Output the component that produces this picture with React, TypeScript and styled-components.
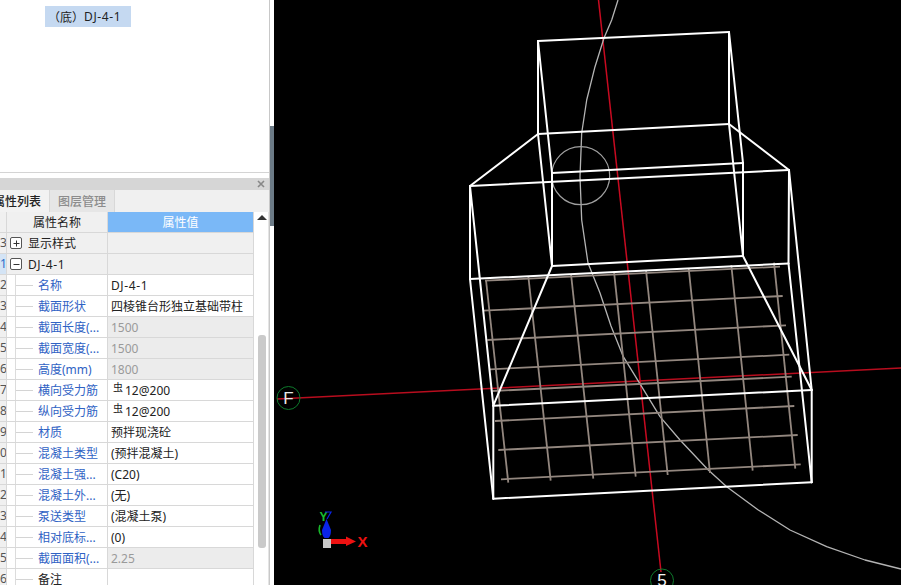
import styled, { createGlobalStyle } from "styled-components";

const GlobalStyle = createGlobalStyle`
  html, body {
    margin: 0;
    height: 100%;
    overflow: hidden;
    background: #000;
  }
  body {
    font-family: "Noto Sans", "Noto Sans CJK SC", sans-serif;
    font-size: 12px;
    color: #222;
  }
`;

const Page = styled.div`
  display: flex;
  width: 901px;
  height: 585px;
  overflow: hidden;
`;

const SidePanel = styled.div`
  display: flex;
  flex-direction: column;
  width: 269px;
  height: 585px;
  background: #fff;
  flex: none;
`;

const TreeArea = styled.div`
  height: 173px;
  padding: 6px 0 0 45px;
  box-sizing: border-box;
  border-bottom: 1px solid #d4d4d4;
  flex: none;
`;

const TreeChip = styled.div`
  display: inline-flex;
  align-items: center;
  height: 21px;
  width: 86px;
  box-sizing: border-box;
  background: #c5d9f1;
  padding-left: 3px;
  white-space: nowrap;
`;

const Latin = styled.span`
  letter-spacing: 0.6px;
`;

const PanelGap = styled.div`
  height: 5px;
  flex: none;
`;

const TitleBar = styled.div`
  display: flex;
  justify-content: flex-end;
  align-items: center;
  height: 12px;
  padding-right: 4px;
  background: #d6d6d6;
  flex: none;
`;

const CloseIcon = styled.svg`
  width: 8px;
  height: 8px;
`;

const TabStrip = styled.div`
  display: flex;
  height: 22px;
  background: #f0f0f0;
  flex: none;
  overflow: hidden;
`;

const Tab = styled.div<{ $active?: boolean }>`
  display: flex;
  align-items: center;
  justify-content: flex-end;
  width: ${(p) => (p.$active ? "50px" : "65px")};
  padding-right: 8px;
  box-sizing: border-box;
  font-weight: 500;
  white-space: nowrap;
  flex: none;
  color: ${(p) => (p.$active ? "#222" : "#8c8c8c")};
  background: ${(p) => (p.$active ? "#f2f2f2" : "#e6e6e6")};
  border-right: 1px solid #d8d8d8;
`;

const TableWrap = styled.div`
  display: flex;
  flex: 1;
  min-height: 0;
  background: #fff;
`;

const Table = styled.div`
  width: 254px;
  flex: none;
  overflow: hidden;
  border-right: 1px solid #d8d8d8;
  box-sizing: border-box;
`;

const Row = styled.div`
  display: flex;
  height: 21px;
  box-sizing: border-box;
  border-bottom: 1px solid #d8d8d8;
`;

const NumCell = styled.div<{ $selected?: boolean }>`
  position: relative;
  width: 7px;
  flex: none;
  overflow: hidden;
  box-sizing: border-box;
  text-align: right;
  line-height: 20px;
  padding-right: 1px;
  color: ${(p) => (p.$selected ? "#2a6fc9" : "#555")};
  background: ${(p) => (p.$selected ? "#d4e4f5" : "#f0f0f0")};
  border-right: 1px solid #d8d8d8;
`;

const NameCell = styled.div<{ $group?: boolean; $header?: boolean }>`
  position: relative;
  display: flex;
  align-items: center;
  width: 101px;
  flex: none;
  box-sizing: border-box;
  white-space: nowrap;
  overflow: hidden;
  border-right: 1px solid #d8d8d8;
  justify-content: ${(p) => (p.$header ? "center" : "flex-start")};
  padding-left: ${(p) => (p.$header ? "0" : p.$group ? "21px" : "31px")};
  background: ${(p) => (p.$group || p.$header ? "#f0f0f0" : "#fff")};
`;

const NameLabel = styled.span<{ $plain?: boolean }>`
  color: ${(p) => (p.$plain ? "#222" : "#2f62c4")};
`;

const TreeStem = styled.span`
  position: absolute;
  left: 8px;
  top: 0;
  bottom: 0;
  width: 17px;
  border-left: 1px solid #dcdcdc;

  &::after {
    content: "";
    position: absolute;
    left: 0;
    right: 0;
    top: 10px;
    border-top: 1px solid #d4d4d4;
  }
`;

const ToggleBox = styled.span`
  position: absolute;
  left: 3px;
  top: 4px;
  width: 12px;
  height: 12px;
  box-sizing: border-box;
  border: 1px solid #555;
  border-radius: 2px;
  background: #fff;
  display: flex;
  align-items: center;
  justify-content: center;
`;

const ToggleMark = styled.svg`
  width: 7px;
  height: 7px;
`;

const ValueCell = styled.div<{ $tone?: "group" | "readonly" | "header" }>`
  display: flex;
  align-items: center;
  flex: 1;
  min-width: 0;
  padding-left: ${(p) => (p.$tone === "header" ? "0" : "3px")};
  white-space: nowrap;
  overflow: hidden;
  color: ${(p) => (p.$tone === "readonly" ? "#9a9a9a" : p.$tone === "header" ? "#fff" : "#222")};
  justify-content: ${(p) => (p.$tone === "header" ? "center" : "flex-start")};
  background: ${(p) =>
    p.$tone === "header"
      ? "#7ab8f7"
      : p.$tone === "group"
        ? "#f0f0f0"
        : p.$tone === "readonly"
          ? "#ececec"
          : "#fff"};
`;

const RebarMark = styled.span`
  font-size: 10px;
  line-height: 1;
  position: relative;
  top: -3px;
  margin: 0 2px 0 2px;
`;

const ScrollTrack = styled.div`
  position: relative;
  flex: 1;
  background: #fff;
  border-right: 1px solid #e4e4e4;
`;

const ScrollArrow = styled.span`
  position: absolute;
  left: 3px;
  top: 3px;
  width: 0;
  height: 0;
  border-left: 5px solid transparent;
  border-right: 5px solid transparent;
  border-bottom: 5px solid #333;
`;

const ScrollThumb = styled.span`
  position: absolute;
  left: 4px;
  top: 123px;
  width: 8px;
  height: 213px;
  border-radius: 3px;
  background: #cacaca;
`;

const Splitter = styled.div`
  width: 5px;
  flex: none;
  height: 585px;
  padding-top: 126px;
  box-sizing: border-box;
  background: #fff;
  border-left: 1px solid #c8c8c8;
`;

const SplitterHandle = styled.div`
  height: 100px;
  background: #6b7a86;
`;

const Viewport = styled.div`
  flex: 1;
  background: #000;
  overflow: hidden;
`;

const Scene = styled.svg`
  display: block;
  width: 100%;
  height: 100%;
`;

type Prop = {
  num: string;
  name: string;
  value?: string;
  tone?: "readonly";
  rebar?: boolean;
  plain?: boolean;
  latin?: boolean;
};

const PROPS: Prop[] = [
  { num: "2", name: "名称", value: "DJ-4-1", latin: true },
  { num: "3", name: "截面形状", value: "四棱锥台形独立基础带柱" },
  { num: "4", name: "截面长度(...", value: "1500", tone: "readonly" },
  { num: "5", name: "截面宽度(...", value: "1500", tone: "readonly" },
  { num: "6", name: "高度(mm)", value: "1800", tone: "readonly" },
  { num: "7", name: "横向受力筋", value: "12@200", rebar: true },
  { num: "8", name: "纵向受力筋", value: "12@200", rebar: true },
  { num: "9", name: "材质", value: "预拌现浇砼" },
  { num: "0", name: "混凝土类型", value: "(预拌混凝土)" },
  { num: "1", name: "混凝土强...", value: "(C20)" },
  { num: "2", name: "混凝土外...", value: "(无)" },
  { num: "3", name: "泵送类型", value: "(混凝土泵)" },
  { num: "4", name: "相对底标...", value: "(0)" },
  { num: "5", name: "截面面积(...", value: "2.25", tone: "readonly" },
  { num: "6", name: "备注", plain: true },
];

// page coordinates, the svg viewBox starts at the left edge of the viewport
const WHITE_LINES = [
  [538, 41, 729, 32],
  [538, 134, 729, 124],
  [538, 41, 538, 134],
  [729, 32, 729, 124],
  [552, 173, 743, 163],
  [470, 186, 789, 170],
  [538, 134, 470, 186],
  [729, 124, 789, 170],
  [552, 266, 743, 256],
  [538, 134, 552, 266],
  [729, 124, 743, 256],
  [470, 279, 788.5, 263.5],
  [470, 186, 470, 279],
  [789, 170, 788.5, 263.5],
  [493.3, 405.7, 811.7, 390],
  [493.3, 498.7, 811.7, 482.3],
  [493.3, 405.7, 493.3, 498.7],
  [811.7, 390, 811.7, 482.3],
  [470, 186, 493.3, 405.7],
  [470, 279, 493.3, 498.7],
  [789, 170, 811.7, 390],
  [788.5, 263.5, 811.7, 482.3],
  [552, 266, 493.3, 405.7],
  [743, 256, 811.7, 390],
];

const COLUMN_EDGES = ["M538 41L552 173L552 266", "M729 32L743 163L743 256"];

const REBAR_LINES = [
  [485, 280.7, 780, 266.7],
  [483.3, 310.7, 782.7, 296],
  [487.3, 340, 786, 325.3],
  [490, 369.3, 789.3, 354.7],
  [492.3, 391, 791.7, 376.7],
  [495, 421, 794.3, 406],
  [498.3, 450, 797.7, 435],
  [501, 479.3, 800.7, 464.3],
  [486, 280, 508.3, 482.7],
  [528.3, 276, 550.7, 480.7],
  [571, 274, 593.3, 478.7],
  [614, 271.7, 635.7, 476.7],
  [646, 270, 667.7, 475],
  [688.7, 268.3, 710, 473],
  [731.3, 265, 752.7, 470.7],
  [774, 262.7, 795.3, 468.7],
];

const ARC_POINTS =
  "618,0 611.7,20 604,38 595,66.7 586.7,100 581.7,133 580,176.7 581.7,220 588,263 600,293 611,326 623.3,356.7 641.7,386.7 660,416.7 680,440 708.3,470 726.7,486.7 758.3,510 790,530 826.7,546.7 865,560 901,569";

function ModelScene() {
  return (
    <Scene viewBox="274 0 627 585" preserveAspectRatio="xMinYMin slice">
      <line x1="598.5" y1="0" x2="661" y2="572" stroke="#c80a20" strokeWidth="1.5" />
      <line x1="277" y1="399" x2="901" y2="368" stroke="#b80d1e" strokeWidth="1.5" />

      <polyline
        points={ARC_POINTS}
        fill="none"
        stroke="#b4b4b4"
        strokeWidth="1.3"
        strokeLinejoin="round"
      />
      <circle cx="580.7" cy="175.7" r="29" fill="none" stroke="#a0a0a0" strokeWidth="1.2" />

      {REBAR_LINES.map(([x1, y1, x2, y2], i) => (
        <line key={i} x1={x1} y1={y1} x2={x2} y2={y2} stroke="#93877f" strokeWidth="1.8" />
      ))}

      <g stroke="#fff" strokeWidth="2" fill="none" strokeLinecap="round">
        {WHITE_LINES.map(([x1, y1, x2, y2], i) => (
          <line key={i} x1={x1} y1={y1} x2={x2} y2={y2} />
        ))}
        {COLUMN_EDGES.map((d) => (
          <path key={d} d={d} />
        ))}
      </g>

      <circle cx="288.5" cy="398" r="11.5" fill="none" stroke="#0e7a2c" strokeWidth="1" />
      <text x="288.5" y="404" fill="#e8e8e8" fontSize="17" textAnchor="middle" fontFamily="Liberation Sans, sans-serif">
        F
      </text>
      <circle cx="662" cy="580.5" r="11.5" fill="none" stroke="#0e7a2c" strokeWidth="1" />
      <text x="662" y="586" fill="#f4f4f4" fontSize="17" textAnchor="middle" fontFamily="Liberation Sans, sans-serif">
        5
      </text>

      {/* axis triad */}
      <path d="M320 525Q318 531 321 535" fill="none" stroke="#18b52a" strokeWidth="1.6" />
      <path d="M326.5 519L331 530Q331 536 328.5 538L324.5 538Q322 536 322 530Z" fill="#0a24e8" />
      <rect x="323" y="539" width="8" height="9" fill="#c8c8c8" />
      <path d="M331 539H346V536.5L356 541.5L346 546V544H331Z" fill="#ee1111" />
      <text x="357.5" y="547" fill="#ee1111" fontSize="15" fontWeight="700" fontFamily="Liberation Sans, sans-serif">
        X
      </text>
      <text x="319.5" y="520.5" fill="#18c030" fontSize="12" fontWeight="700" fontFamily="Liberation Sans, sans-serif">
        Y
      </text>
      <path d="M325 512H331L327 519" fill="none" stroke="#0a24e8" strokeWidth="1.2" />
    </Scene>
  );
}

export default function App() {
  return (
    <Page>
      <GlobalStyle />
      <SidePanel>
        <TreeArea>
          <TreeChip>
            （底）<Latin>DJ-4-1</Latin>
          </TreeChip>
        </TreeArea>
        <PanelGap />
        <TitleBar>
          <CloseIcon viewBox="0 0 8 8">
            <path d="M1 1L7 7M7 1L1 7" stroke="#888" strokeWidth="1.6" />
          </CloseIcon>
        </TitleBar>
        <TabStrip>
          <Tab $active>属性列表</Tab>
          <Tab>图层管理</Tab>
        </TabStrip>
        <TableWrap>
          <Table>
            <Row>
              <NumCell />
              <NameCell $header>属性名称</NameCell>
              <ValueCell $tone="header">属性值</ValueCell>
            </Row>
            <Row>
              <NumCell>3</NumCell>
              <NameCell $group>
                <ToggleBox>
                  <ToggleMark viewBox="0 0 7 7">
                    <path d="M0.5 3.5H6.5M3.5 0.5V6.5" stroke="#333" strokeWidth="1" />
                  </ToggleMark>
                </ToggleBox>
                <NameLabel $plain>显示样式</NameLabel>
              </NameCell>
              <ValueCell $tone="group" />
            </Row>
            <Row>
              <NumCell $selected>1</NumCell>
              <NameCell $group>
                <ToggleBox>
                  <ToggleMark viewBox="0 0 7 7">
                    <path d="M0.5 3.5H6.5" stroke="#333" strokeWidth="1" />
                  </ToggleMark>
                </ToggleBox>
                <NameLabel $plain>
                  <Latin>DJ-4-1</Latin>
                </NameLabel>
              </NameCell>
              <ValueCell $tone="group" />
            </Row>
            {PROPS.map((p, i) => (
              <Row key={i}>
                <NumCell>{p.num}</NumCell>
                <NameCell>
                  <TreeStem />
                  <NameLabel $plain={p.plain}>{p.name}</NameLabel>
                </NameCell>
                <ValueCell $tone={p.tone}>
                  {p.rebar && <RebarMark>虫</RebarMark>}
                  {p.latin ? <Latin>{p.value}</Latin> : p.value}
                </ValueCell>
              </Row>
            ))}
          </Table>
          <ScrollTrack>
            <ScrollArrow />
            <ScrollThumb />
          </ScrollTrack>
        </TableWrap>
      </SidePanel>
      <Splitter>
        <SplitterHandle />
      </Splitter>
      <Viewport>
        <ModelScene />
      </Viewport>
    </Page>
  );
}
